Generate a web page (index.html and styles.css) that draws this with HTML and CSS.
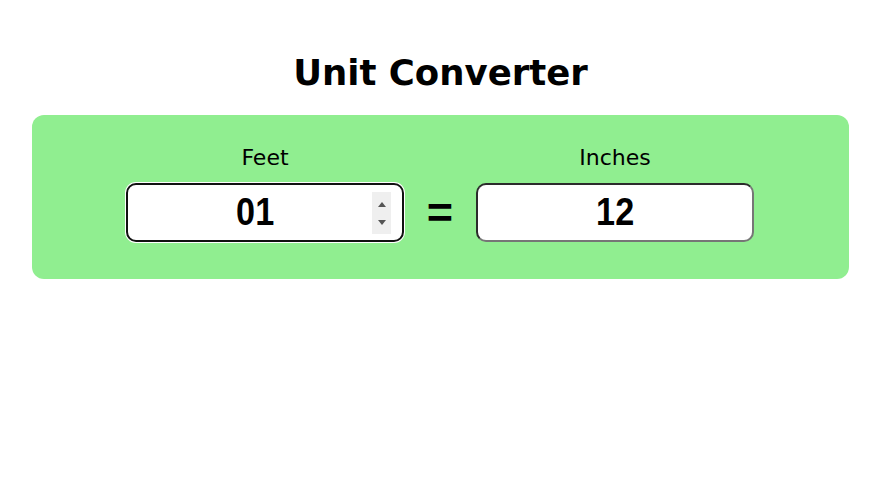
FILE: index.html
```html
<!DOCTYPE html>
<html>
<head>
<meta charset="utf-8">
<link rel="stylesheet" href="styles.css">
</head>
<body>
<h1 class="title">Unit Converter</h1>
<div class="panel">
  <div class="field">
    <label class="label">Feet</label>
    <div class="box box-active">
      <span class="value">01</span>
      <span class="spin"><span class="up"></span><span class="down"></span></span>
    </div>
  </div>
  <div class="eq">=</div>
  <div class="field">
    <label class="label">Inches</label>
    <div class="box box-out"><span class="value">12</span></div>
  </div>
</div>
</body>
</html>
```

FILE: styles.css
```css
html, body {
  margin: 0;
  padding: 0;
  background: #fff;
}
body {
  padding: 0 31px 0 32px;
  font-family: "DejaVu Sans", Verdana, sans-serif;
}
.title {
  margin: 0;
  padding-top: 52px;
  height: 115px;
  box-sizing: border-box;
  text-align: center;
  font-size: 35.5px;
  line-height: 42px;
  font-weight: bold;
  color: #000;
}
.panel {
  background: #90ee90;
  border-radius: 12px;
  height: 164px;
  box-sizing: border-box;
  padding: 30px 1px 37px 0;
  display: flex;
  justify-content: center;
  align-items: flex-end;
  gap: 24px;
}
.field {
  display: flex;
  flex-direction: column;
  align-items: center;
  width: 278px;
}
.label {
  font-size: 22px;
  line-height: 24px;
  color: #000;
  margin-bottom: 13px;
}
.box {
  position: relative;
  width: 278px;
  height: 59px;
  box-sizing: border-box;
  border-radius: 10px;
  background: #fff;
  display: flex;
  align-items: center;
  justify-content: center;
  font-family: "Liberation Sans", Arial, sans-serif;
  font-weight: bold;
  font-size: 38px;
  color: #000;
}
.value {
  display: inline-block;
  transform: scaleX(0.9);
}
.box-active {
  border: 2px solid #111;
  box-shadow: 0 0 0 1px #fff;
}
.box-active .value {
  margin-right: 20px;
}
.box-out {
  border: 2px solid;
  border-color: #2b2b2b #767676 #767676 #2b2b2b;
}
.spin {
  position: absolute;
  right: 11px;
  top: 7px;
  width: 19px;
  height: 42px;
  background: #efefef;
  display: flex;
  flex-direction: column;
  align-items: center;
  justify-content: center;
  gap: 13px;
}
.up {
  width: 0;
  height: 0;
  border-left: 4.5px solid transparent;
  border-right: 4.5px solid transparent;
  border-bottom: 5px solid #555;
}
.down {
  width: 0;
  height: 0;
  border-left: 4.5px solid transparent;
  border-right: 4.5px solid transparent;
  border-top: 5px solid #555;
}
.eq {
  font-family: "Liberation Sans", Arial, sans-serif;
  font-weight: bold;
  font-size: 45px;
  line-height: 59px;
  height: 59px;
  color: #000;
  width: 24px;
  display: flex;
  justify-content: center;
}
```
